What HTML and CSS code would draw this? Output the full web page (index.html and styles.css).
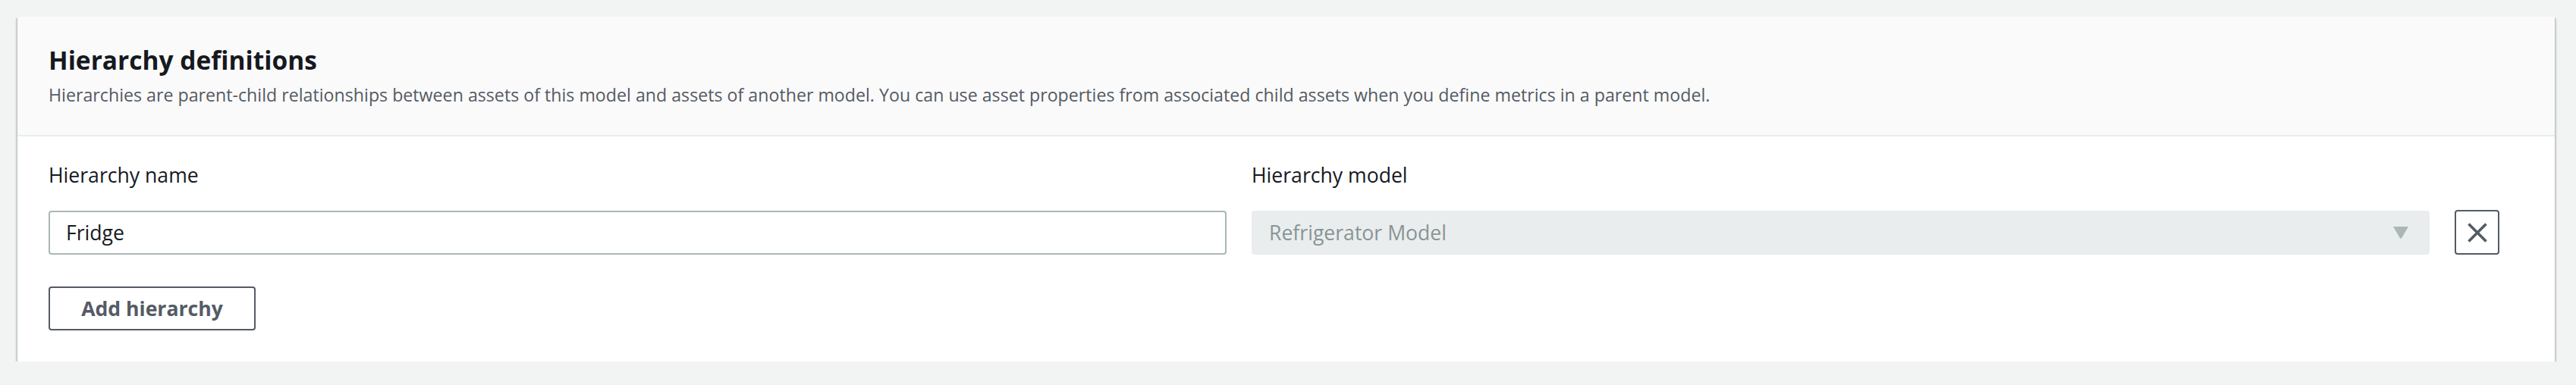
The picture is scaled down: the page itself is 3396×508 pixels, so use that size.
FILE: index.html
```html
<!DOCTYPE html>
<html lang="en">
<head>
<meta charset="utf-8">
<title>Hierarchy definitions</title>
<link rel="stylesheet" href="styles.css">
</head>
<body>
<div class="card">
  <div class="card-header">
    <h2 class="title">Hierarchy definitions</h2>
    <p class="desc">Hierarchies are parent-child relationships between assets of this model and assets of another model. You can use asset properties from associated child assets when you define metrics in a parent model.</p>
  </div>
  <div class="card-body">
    <div class="row">
      <div class="label">Hierarchy name</div>
      <div class="label">Hierarchy model</div>
      <div></div>
      <div class="input">Fridge</div>
      <div class="select">
        <span>Refrigerator Model</span>
        <svg class="caret" width="20" height="16" viewBox="0 0 20 16"><path d="M0 0 H20 L11.2 15 Q10 16.6 8.8 15 Z" fill="#aab7b8"/></svg>
      </div>
      <div class="remove">
        <svg width="26" height="26" viewBox="0 0 26 26"><path d="M1.5 1.5 L24.5 24.5 M24.5 1.5 L1.5 24.5" stroke="#545b64" stroke-width="3.6" fill="none"/></svg>
      </div>
    </div>
    <div class="btn">Add hierarchy</div>
  </div>
</div>
</body>
</html>
```
FILE: styles.css
```css
html, body {
  margin: 0;
  background: #f2f3f3;
}
body {
  padding: 22px 28px 0 23px;
  font-family: "Open Sans", "Noto Sans", sans-serif;
  color: #16191f;
}
.card {
  background: #ffffff;
  box-shadow: 0 2px 2px 0 rgba(0, 28, 36, 0.3), 2px 2px 2px 0 rgba(0, 28, 36, 0.15), -2px 2px 2px 0 rgba(0, 28, 36, 0.15);
}
.card-header {
  background: #fafafa;
  border-bottom: 2px solid #eaeded;
  padding: 35px 41px 37px 41px;
}
.title {
  margin: 0;
  font-size: 33.5px;
  line-height: 44px;
  font-weight: 700;
  color: #16191f;
}
.desc {
  margin: 8px 0 0 0;
  font-size: 23.2px;
  line-height: 32px;
  color: #545b64;
}
.card-body {
  padding: 35px 73px 41px 41px;
}
.row {
  display: grid;
  grid-template-columns: 1fr 1fr 59px;
  column-gap: 33px;
  row-gap: 30px;
  align-items: center;
}
.label {
  font-size: 26.6px;
  line-height: 32px;
  color: #16191f;
}
.input {
  height: 58px;
  box-sizing: border-box;
  border: 2px solid #aab7b8;
  border-radius: 4px;
  padding: 0 21px;
  display: flex;
  align-items: center;
  font-size: 26.6px;
  color: #16191f;
}
.select {
  height: 58px;
  box-sizing: border-box;
  background: #eaeded;
  border-radius: 4px;
  padding: 0 28px 0 23px;
  display: flex;
  align-items: center;
  justify-content: space-between;
  font-size: 26.6px;
  color: #879596;
}
.caret {
  display: block;
}
.remove {
  width: 59px;
  height: 59px;
  box-sizing: border-box;
  border: 2px solid #545b64;
  border-radius: 4px;
  display: flex;
  align-items: center;
  justify-content: center;
}
.remove svg {
  display: block;
}
.btn {
  margin-top: 42px;
  width: 273px;
  height: 58px;
  box-sizing: border-box;
  border: 2px solid #545b64;
  border-radius: 4px;
  display: flex;
  align-items: center;
  justify-content: center;
  font-size: 26.6px;
  font-weight: 700;
  color: #545b64;
}
```
